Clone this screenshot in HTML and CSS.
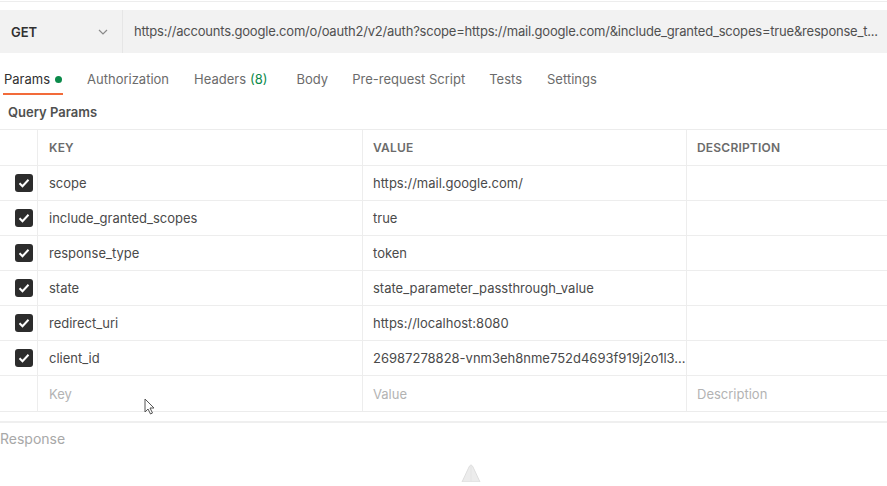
FILE: index.html
```html
<!DOCTYPE html>
<html>
<head>
<meta charset="utf-8">
<link rel="stylesheet" href="styles.css">
</head>
<body>
<div class="page">
  <div class="topline"></div>
  <div class="urlbar">
    <div class="method">
      <span class="method-name">GET</span>
      <svg class="chev" width="10" height="6" viewBox="0 0 10 6"><path d="M1 1l4 4 4-4" fill="none" stroke="#8a8a8a" stroke-width="1.2"/></svg>
    </div>
    <div class="url">https://accounts.google.com/o/oauth2/v2/auth?scope=https://mail.google.com/&amp;include_granted_scopes=true&amp;response_t...</div>
  </div>
  <div class="tabs">
    <div class="tab active">Params <span class="dot"></span></div>
    <div class="tab">Authorization</div>
    <div class="tab">Headers <span class="count">(8)</span></div>
    <div class="tab">Body</div>
    <div class="tab">Pre-request Script</div>
    <div class="tab">Tests</div>
    <div class="tab">Settings</div>
  </div>
  <div class="section-title">Query Params</div>
  <div class="table">
    <div class="row head">
      <div class="cell chk"></div>
      <div class="cell key">KEY</div>
      <div class="cell val">VALUE</div>
      <div class="cell desc">DESCRIPTION</div>
    </div>
    <div class="row">
      <div class="cell chk"><span class="box"><svg width="12" height="10" viewBox="0 0 12 10"><path d="M1.5 5.2l3 3 6-6.4" fill="none" stroke="#fff" stroke-width="2"/></svg></span></div>
      <div class="cell key">scope</div>
      <div class="cell val">https://mail.google.com/</div>
      <div class="cell desc"></div>
    </div>
    <div class="row">
      <div class="cell chk"><span class="box"><svg width="12" height="10" viewBox="0 0 12 10"><path d="M1.5 5.2l3 3 6-6.4" fill="none" stroke="#fff" stroke-width="2"/></svg></span></div>
      <div class="cell key">include_granted_scopes</div>
      <div class="cell val">true</div>
      <div class="cell desc"></div>
    </div>
    <div class="row">
      <div class="cell chk"><span class="box"><svg width="12" height="10" viewBox="0 0 12 10"><path d="M1.5 5.2l3 3 6-6.4" fill="none" stroke="#fff" stroke-width="2"/></svg></span></div>
      <div class="cell key">response_type</div>
      <div class="cell val">token</div>
      <div class="cell desc"></div>
    </div>
    <div class="row">
      <div class="cell chk"><span class="box"><svg width="12" height="10" viewBox="0 0 12 10"><path d="M1.5 5.2l3 3 6-6.4" fill="none" stroke="#fff" stroke-width="2"/></svg></span></div>
      <div class="cell key">state</div>
      <div class="cell val">state_parameter_passthrough_value</div>
      <div class="cell desc"></div>
    </div>
    <div class="row">
      <div class="cell chk"><span class="box"><svg width="12" height="10" viewBox="0 0 12 10"><path d="M1.5 5.2l3 3 6-6.4" fill="none" stroke="#fff" stroke-width="2"/></svg></span></div>
      <div class="cell key">redirect_uri</div>
      <div class="cell val">https://localhost:8080</div>
      <div class="cell desc"></div>
    </div>
    <div class="row">
      <div class="cell chk"><span class="box"><svg width="12" height="10" viewBox="0 0 12 10"><path d="M1.5 5.2l3 3 6-6.4" fill="none" stroke="#fff" stroke-width="2"/></svg></span></div>
      <div class="cell key">client_id</div>
      <div class="cell val">26987278828-vnm3eh8nme752d4693f919j2o1l3...</div>
      <div class="cell desc"></div>
    </div>
    <div class="row">
      <div class="cell chk"></div>
      <div class="cell key ph">Key</div>
      <div class="cell val ph">Value</div>
      <div class="cell desc ph">Description</div>
    </div>
  </div>
  <div class="response">
    <div class="response-title">Response</div>
    <div class="illus">
      <svg width="40" height="20" viewBox="0 0 40 20"><path d="M10 20 L17 5 Q19 1 21 5 L28 20 Z" fill="#ececec" stroke="#dedede" stroke-width="1"/><path d="M19 3 L19 20" stroke="#e4e4e4" stroke-width="1"/></svg>
    </div>
  </div>
  <svg class="cursor" width="12" height="18" viewBox="0 0 12 18"><path d="M1 1 L1 14 L4 11 L6.5 16 L8.5 15 L6 10 L10 10 Z" fill="#fff" stroke="#555" stroke-width="1"/></svg>
</div>
</body>
</html>
```

FILE: styles.css
```css
* { box-sizing: border-box; }
html, body { margin: 0; padding: 0; background: #fff; }
body { font-family: Inter, "Noto Sans", "Liberation Sans", sans-serif; color: #3a3a3a; }
.page { position: relative; width: 887px; height: 486px; overflow: hidden; }
.topline { height: 1px; margin-top: 1px; background: #ededed; }
.urlbar { display: flex; height: 43px; margin-top: 8px; background: #f2f2f2; }
.method { width: 123px; flex: none; display: flex; align-items: center; justify-content: space-between; padding: 0 14px 0 11px; border-right: 1px solid #e6e6e6; }
.method-name { font-weight: 600; font-size: 13px; color: #303030; }
.url { flex: 1; min-width: 0; padding-left: 11px; font-size: 13px; letter-spacing: -0.2px; color: #505050; white-space: nowrap; line-height: 43px; }
.tabs { display: flex; height: 43px; padding-left: 4px; }
.tab { position: relative; font-size: 13px; color: #6b6b6b; margin-right: 25px; padding-top: 18px; display: flex; align-items: flex-start; }
.tab.active { color: #303030; }
.tab.active::after { content: ""; position: absolute; left: -1px; right: -1px; top: 40px; height: 2px; background: #f26b3a; }
.tab:nth-child(2) { margin-right: 25px; }
.tab:nth-child(3) { margin-right: 29px; }
.tab:nth-child(4) { margin-right: 24px; }
.tab:nth-child(5) { margin-right: 24px; }
.dot { display: inline-block; width: 7px; height: 7px; border-radius: 50%; background: #0b8a4a; margin-left: 5px; margin-top: 5px; }
.count { color: #0b8a4a; margin-left: 4px; }
.section-title { font-size: 13px; font-weight: 600; color: #505050; padding-left: 8px; height: 33px; line-height: 32px; }
.table { border-top: 1px solid #ececec; border-bottom: 1px solid #ececec; }
.row { display: grid; grid-template-columns: 37px 325px 324px 1fr; height: 35px; border-bottom: 1px solid #ededed; }
.row:last-child { border-bottom: none; }
.row.head { height: 36px; }
.cell { display: flex; align-items: center; padding-left: 11px; font-size: 13px; color: #4a4a4a; white-space: nowrap; overflow: hidden; border-left: 1px solid #ededed; }
.cell.chk { border-left: none; padding-left: 15px; }
.head .cell { font-size: 12px; font-weight: 600; color: #6b6b6b; letter-spacing: 0.2px; }
.cell.val { padding-left: 10px; }
.cell.desc { padding-left: 10px; }
.cell.ph { color: #b3b3b3; }
.box { width: 18px; height: 18px; border-radius: 3px; background: #2c2c2c; display: flex; align-items: center; justify-content: center; }
.response { margin-top: 9px; border-top: 2px solid #efefef; height: 80px; }
.response-title { font-size: 14px; color: #a8a8a8; padding-top: 7px; }
.illus { display: flex; padding-left: 452px; margin-top: 15px; }
.cursor { position: absolute; left: 144px; top: 398px; }
```
